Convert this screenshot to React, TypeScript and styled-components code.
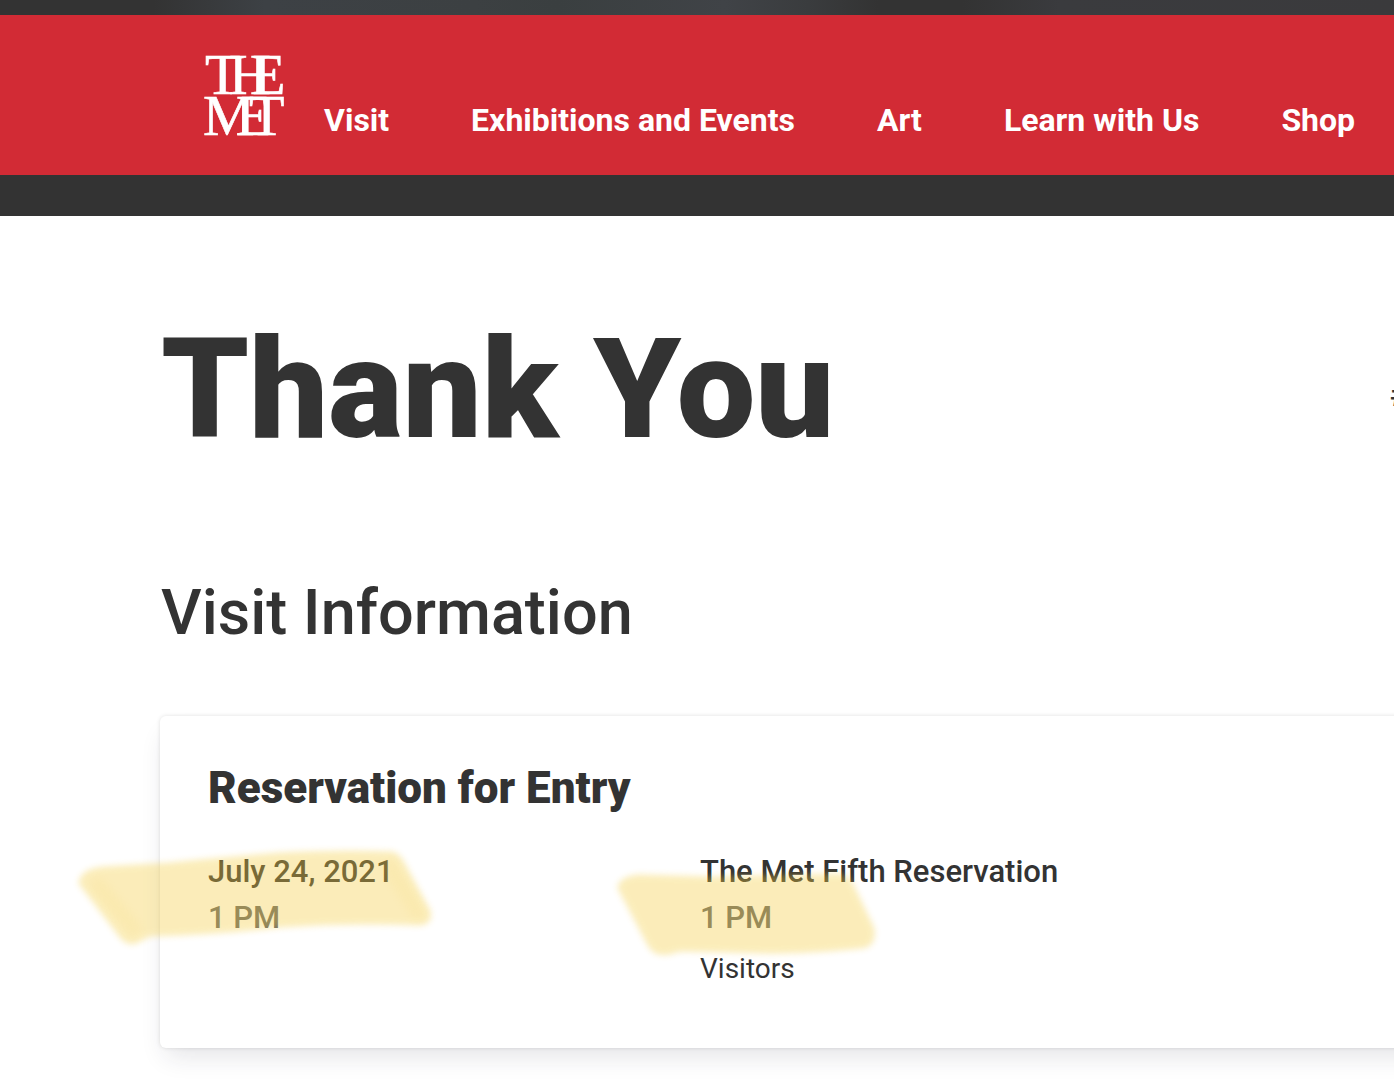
import React from "react";
import styled, { createGlobalStyle } from "styled-components";

const ink = "#333333";
const muted = "#666666";

const GlobalStyle = createGlobalStyle`
  *, *::before, *::after { box-sizing: border-box; }
  body {
    margin: 0;
    background: #ffffff;
    color: ${ink};
    font-family: Roboto, "Liberation Sans", sans-serif;
    overflow-x: hidden;
  }
  h1, h2, h3, p { margin: 0; }
`;

const Page = styled.div`
  min-height: 100vh;
  overflow: hidden;
`;

const TopStrip = styled.div`
  height: 15px;
  background: linear-gradient(
    90deg,
    #333333 0%,
    #333333 11%,
    #3d4145 19%,
    #3c4042 34%,
    #3a3f40 40%,
    #404347 52%,
    #3a3c3e 58%,
    #333333 63%,
    #333333 69%,
    #3a3b3e 76%,
    #3a3a3c 100%
  );
`;

const Header = styled.header`
  display: flex;
  align-items: flex-end;
  height: 160px;
  padding: 0 40px 39px 204px;
  background: #d22b35;
`;

const LogoLink = styled.a`
  display: block;
  flex: none;
  width: 80px;
  height: 81px;
`;

const LogoSvg = styled.svg`
  display: block;
  overflow: visible;
  font-family: "Liberation Serif", serif;
  font-size: 58px;
  fill: #ffffff;
`;

const Nav = styled.nav`
  display: flex;
  gap: 82px;
  margin-left: 40px;
`;

const NavLink = styled.a`
  color: #ffffff;
  font-size: 32px;
  font-weight: 700;
  line-height: 32px;
  white-space: nowrap;
  text-decoration: none;
`;

const SubBar = styled.div`
  height: 41px;
  background: ${ink};
`;

const Main = styled.main`
  padding: 105px 0 42px 161px;
`;

const TitleRow = styled.div`
  display: flex;
  align-items: flex-start;
  justify-content: space-between;
`;

const Title = styled.h1`
  font-size: 140px;
  font-weight: 900;
  line-height: 136px;
  white-space: nowrap;
`;

const OrderNumber = styled.p`
  flex: none;
  width: 4px;
  padding-top: 54px;
  font-size: 32px;
  font-weight: 700;
  line-height: 40px;
  white-space: nowrap;
`;

const SectionTitle = styled.h2`
  margin-top: 116px;
  font-size: 63px;
  font-weight: 500;
  line-height: 80px;
`;

const Card = styled.section`
  position: relative;
  margin: 63px -80px 0 -1px;
  padding: 48px 48px 59px;
  border-radius: 6px;
  background: #ffffff;
  box-shadow: 0 0 4px rgba(0, 0, 0, 0.12), 0 14px 24px -6px rgba(30, 30, 60, 0.12);
`;

const CardTitle = styled.h3`
  font-size: 44px;
  font-weight: 900;
  line-height: 48px;
`;

const Columns = styled.div`
  display: grid;
  grid-template-columns: 492px 1fr;
  margin-top: 37px;
`;

const Detail = styled.p<{ $muted?: boolean }>`
  color: ${(p) => (p.$muted ? muted : ink)};
  font-size: 31px;
  font-weight: 500;
  line-height: 46px;
  white-space: nowrap;
`;

const Note = styled.p`
  margin-top: 8px;
  font-size: 28px;
  line-height: 40px;
`;

const Markers = styled.svg`
  position: absolute;
  top: 115px;
  left: -100px;
  width: 840px;
  height: 145px;
  pointer-events: none;
`;

const links = ["Visit", "Exhibitions and Events", "Art", "Learn with Us", "Shop"];

function Logo() {
  return (
    <LogoSvg width="80" height="80" viewBox="0 0 80 80" role="img" aria-label="The Met">
      <g stroke="#ffffff" strokeWidth="0.6">
        <text x="1 25 46" y="39">THE</text>
        <text x="-1 32 45" y="80">MET</text>
      </g>
    </LogoSvg>
  );
}

function Highlights() {
  return (
    <Markers viewBox="0 0 840 145" aria-hidden="true">
      <defs>
        <filter id="soft" x="-10%" y="-20%" width="120%" height="140%">
          <feGaussianBlur stdDeviation="3" />
        </filter>
        <filter id="softer" x="-40%" y="-40%" width="180%" height="180%">
          <feGaussianBlur stdDeviation="5" />
        </filter>
      </defs>
      <g fill="#f4cd3f" stroke="#f4cd3f" strokeWidth="3" opacity="0.36" filter="url(#soft)">
        <path d="M20 52 Q22 39 44 37 L110 33 Q170 27 220 23 Q280 20 332 22 Q339 24 343 32 L369 80 Q372 92 360 93 Q290 90 220 95 Q160 102 90 104 L78 110 Q70 115 62 107 Z" />
        <path d="M559 57 Q560 47 578 45 L650 47 L780 44 Q789 46 793 56 L813 98 Q815 114 802 116 Q740 122 700 121 L620 119 Q605 124 600 122 Q593 122 588 112 Z" />
      </g>
      <g fill="none" stroke="#f4cd3f" strokeWidth="14" strokeLinecap="round" opacity="0.08" filter="url(#softer)">
        <path d="M38 54 L74 98" />
        <path d="M330 36 L358 82" />
      </g>
    </Markers>
  );
}

export default function App() {
  return (
    <Page>
      <GlobalStyle />
      <TopStrip />
      <Header>
        <LogoLink href="#">
          <Logo />
        </LogoLink>
        <Nav>
          {links.map((label) => (
            <NavLink key={label} href="#">{label}</NavLink>
          ))}
        </Nav>
      </Header>
      <SubBar />
      <Main>
        <TitleRow>
          <Title>Thank You</Title>
          <OrderNumber>#</OrderNumber>
        </TitleRow>
        <SectionTitle>Visit Information</SectionTitle>
        <Card>
          <CardTitle>Reservation for Entry</CardTitle>
          <Columns>
            <div>
              <Detail>July 24, 2021</Detail>
              <Detail $muted>1 PM</Detail>
            </div>
            <div>
              <Detail>The Met Fifth Reservation</Detail>
              <Detail $muted>1 PM</Detail>
              <Note>Visitors</Note>
            </div>
          </Columns>
          <Highlights />
        </Card>
      </Main>
    </Page>
  );
}
